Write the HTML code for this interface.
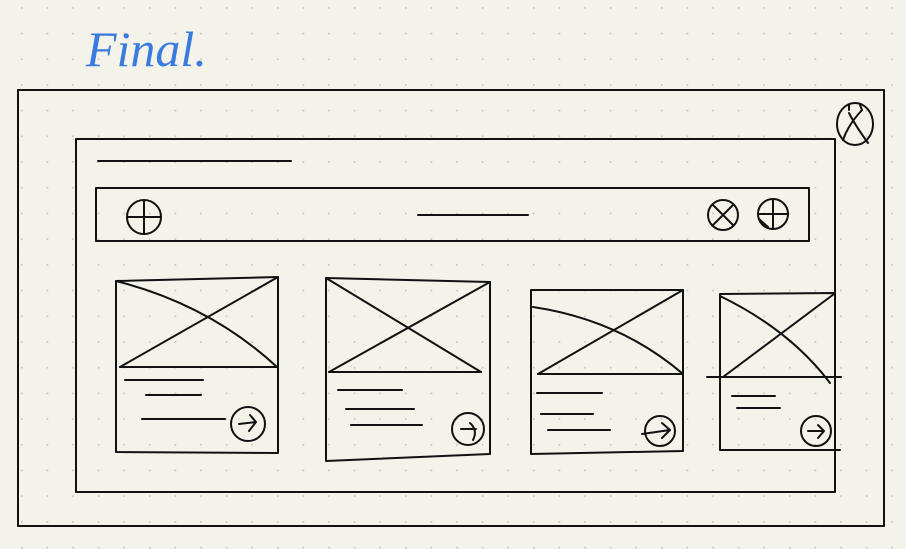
<!DOCTYPE html>
<html><head><style>
html,body{margin:0;padding:0;background:#f4f3ea;}
svg{display:block}
</style></head><body>
<svg width="906" height="549" viewBox="0 0 906 549" xmlns="http://www.w3.org/2000/svg">
<defs>
<pattern id="d" x="9" y="-5" width="25.6" height="25.7" patternUnits="userSpaceOnUse">
<circle cx="12.8" cy="12.8" r="1" fill="#c9c8bf"/>
</pattern>
</defs>
<rect width="906" height="549" fill="#f4f3ea"/>
<rect width="906" height="549" fill="url(#d)"/>
<text x="86" y="66" font-family="Liberation Serif, serif" font-style="italic" font-size="50" fill="#3a7be0">Final.</text>
<g fill="none" stroke="#111" stroke-width="2" stroke-linecap="round" stroke-linejoin="round">
<rect x="18" y="90" width="866" height="436"/>
<rect x="76" y="139" width="759" height="353"/>
<line x1="98" y1="161" x2="291" y2="161"/>
<rect x="96" y="188" width="713" height="53"/>
<circle cx="144" cy="217" r="17"/><line x1="144" y1="200" x2="144" y2="234"/><line x1="127" y1="217" x2="161" y2="217"/>
<line x1="418" y1="215" x2="528" y2="215"/>
<circle cx="723" cy="215" r="15"/><line x1="713" y1="205" x2="733" y2="225"/><line x1="733" y1="205" x2="713" y2="225"/>
<circle cx="773" cy="214" r="15"/><line x1="773" y1="199" x2="773" y2="229"/><line x1="758" y1="214" x2="788" y2="214"/><line x1="759" y1="219" x2="768" y2="227"/>
<ellipse cx="855" cy="124" rx="18" ry="21"/><path d="M849 113 Q855 125 868 143 M862 110 Q848 125 843 140 M849 105 L849 110 M860 105 L862 110"/>
<!-- card1 -->
<path d="M116 281 L278 277 L278 453 L116 452 Z"/>
<line x1="120" y1="367" x2="277" y2="367"/>
<path d="M116 281 Q210 305 277 367"/><line x1="278" y1="277" x2="120" y2="367"/>
<line x1="125" y1="380" x2="203" y2="380"/><line x1="146" y1="395" x2="201" y2="395"/><line x1="142" y1="419" x2="225" y2="419"/>
<circle cx="248" cy="424" r="17"/><path d="M239 424 L256 422 M250 415 L256 422 L249 431"/>
<!-- card2 -->
<path d="M326 278 L490 282 L490 454 L326 461 Z"/>
<line x1="329" y1="372" x2="481" y2="372"/>
<line x1="326" y1="278" x2="481" y2="372"/><line x1="490" y1="282" x2="329" y2="372"/>
<line x1="338" y1="390" x2="402" y2="390"/><line x1="346" y1="409" x2="414" y2="409"/><line x1="351" y1="425" x2="422" y2="425"/>
<circle cx="468" cy="429" r="16"/><path d="M461 429 L476 429 M470 423 Q478 430 473 440"/>
<!-- card3 -->
<path d="M531 290 L683 290 L683 451 L531 454 Z"/>
<line x1="538" y1="374" x2="683" y2="374"/>
<path d="M533 307 Q620 320 683 374"/><line x1="683" y1="290" x2="538" y2="374"/>
<line x1="537" y1="393" x2="602" y2="393"/><line x1="541" y1="414" x2="593" y2="414"/><line x1="548" y1="430" x2="610" y2="430"/>
<circle cx="660" cy="431" r="15"/><path d="M642 434 L670 430 M662 423 L670 430 L662 438"/>
<!-- card4 -->
<path d="M720 294 L835 293 L835 450 L720 450 Z"/>
<line x1="707" y1="377" x2="841" y2="377"/>
<path d="M720 296 Q790 330 830 383"/><line x1="834" y1="294" x2="723" y2="377"/>
<line x1="732" y1="396" x2="775" y2="396"/><line x1="737" y1="408" x2="780" y2="408"/>
<line x1="720" y1="450" x2="840" y2="450"/>
<circle cx="816" cy="431" r="15"/><path d="M808 431 L824 431 M818 425 L824 431 L818 438"/>
</g>
</svg>
</body></html>
